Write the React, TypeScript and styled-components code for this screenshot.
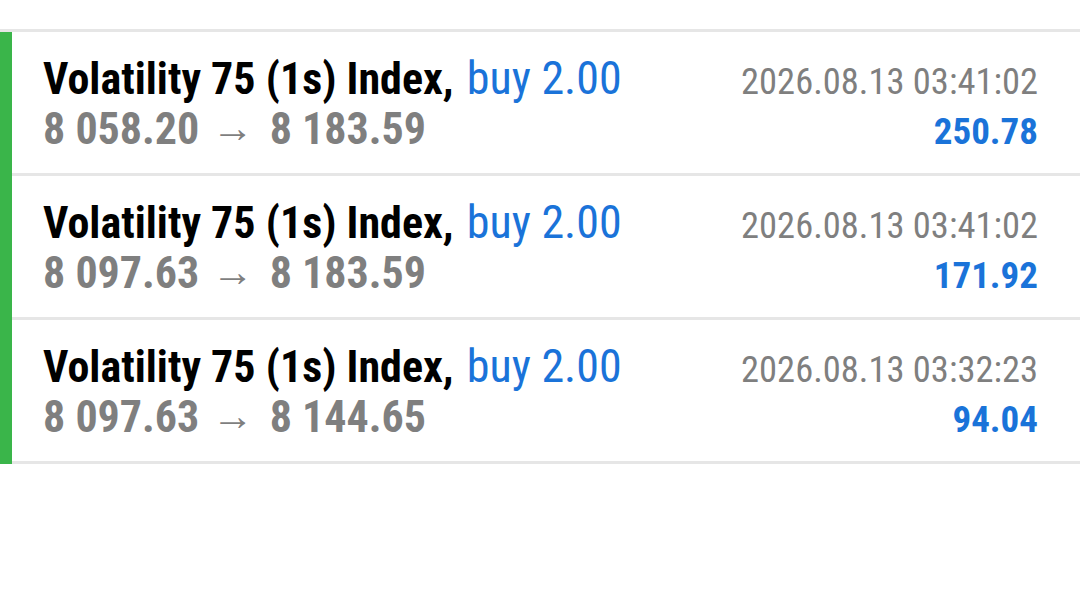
import React from "react";
import styled, { createGlobalStyle } from "styled-components";

const GlobalStyle = createGlobalStyle`
  html, body { margin: 0; padding: 0; background: #ffffff; }
  body { font-family: 'Roboto Condensed', Roboto, sans-serif; }
`;

const Page = styled.div`
  width: 1080px;
  height: 608px;
  padding-top: 29px;
  box-sizing: border-box;
  background: #ffffff;
`;

const List = styled.div`
  border-top: 3px solid #e6e6e6;
`;

const Rail = styled.div`
  border-left: 12px solid #3ab54a;
`;

const Row = styled.div`
  display: grid;
  grid-template-columns: 1fr auto;
  grid-template-rows: 51px 51px;
  align-items: baseline;
  padding: 21px 42px 18px 31px;
  border-bottom: 3px solid #e6e6e6;
  height: 144px;
  box-sizing: border-box;
  font-family: 'Roboto Condensed', Roboto, sans-serif;
  white-space: nowrap;
`;

const Title = styled.div`
  font-size: 44px;
  line-height: 51px;
  font-weight: 700;
  color: #000000;
`;

const Side = styled.span`
  font-weight: 400;
  font-size: 46px;
  margin-left: 3px;
  color: #1a73d9;
`;

const Prices = styled.div`
  font-size: 44px;
  line-height: 51px;
  font-weight: 700;
  color: #7f7f7f;
`;

const Arrow = styled.span`
  font-weight: 400;
  font-size: 42px;
  padding: 0 6px 0 2px;
  position: relative;
  top: -2px;
`;

const Time = styled.div`
  font-size: 36.5px;
  line-height: 51px;
  font-weight: 400;
  color: #7f7f7f;
  text-align: right;
`;

const Profit = styled.div`
  font-size: 37px;
  line-height: 51px;
  font-weight: 700;
  color: #1a73d9;
  text-align: right;
`;

type Deal = { open: string; close: string; time: string; profit: string };

const deals: Deal[] = [
  { open: "8 058.20", close: "8 183.59", time: "2026.08.13 03:41:02", profit: "250.78" },
  { open: "8 097.63", close: "8 183.59", time: "2026.08.13 03:41:02", profit: "171.92" },
  { open: "8 097.63", close: "8 144.65", time: "2026.08.13 03:32:23", profit: "94.04" },
];

export default function App() {
  return (
    <>
      <GlobalStyle />
      <Page>
        <List>
          <Rail>
            {deals.map((d, i) => (
              <Row key={i}>
                <Title>
                  Volatility 75 (1s) Index, <Side>buy 2.00</Side>
                </Title>
                <Time>{d.time}</Time>
                <Prices>
                  {d.open} <Arrow>→</Arrow> {d.close}
                </Prices>
                <Profit>{d.profit}</Profit>
              </Row>
            ))}
          </Rail>
        </List>
      </Page>
    </>
  );
}
